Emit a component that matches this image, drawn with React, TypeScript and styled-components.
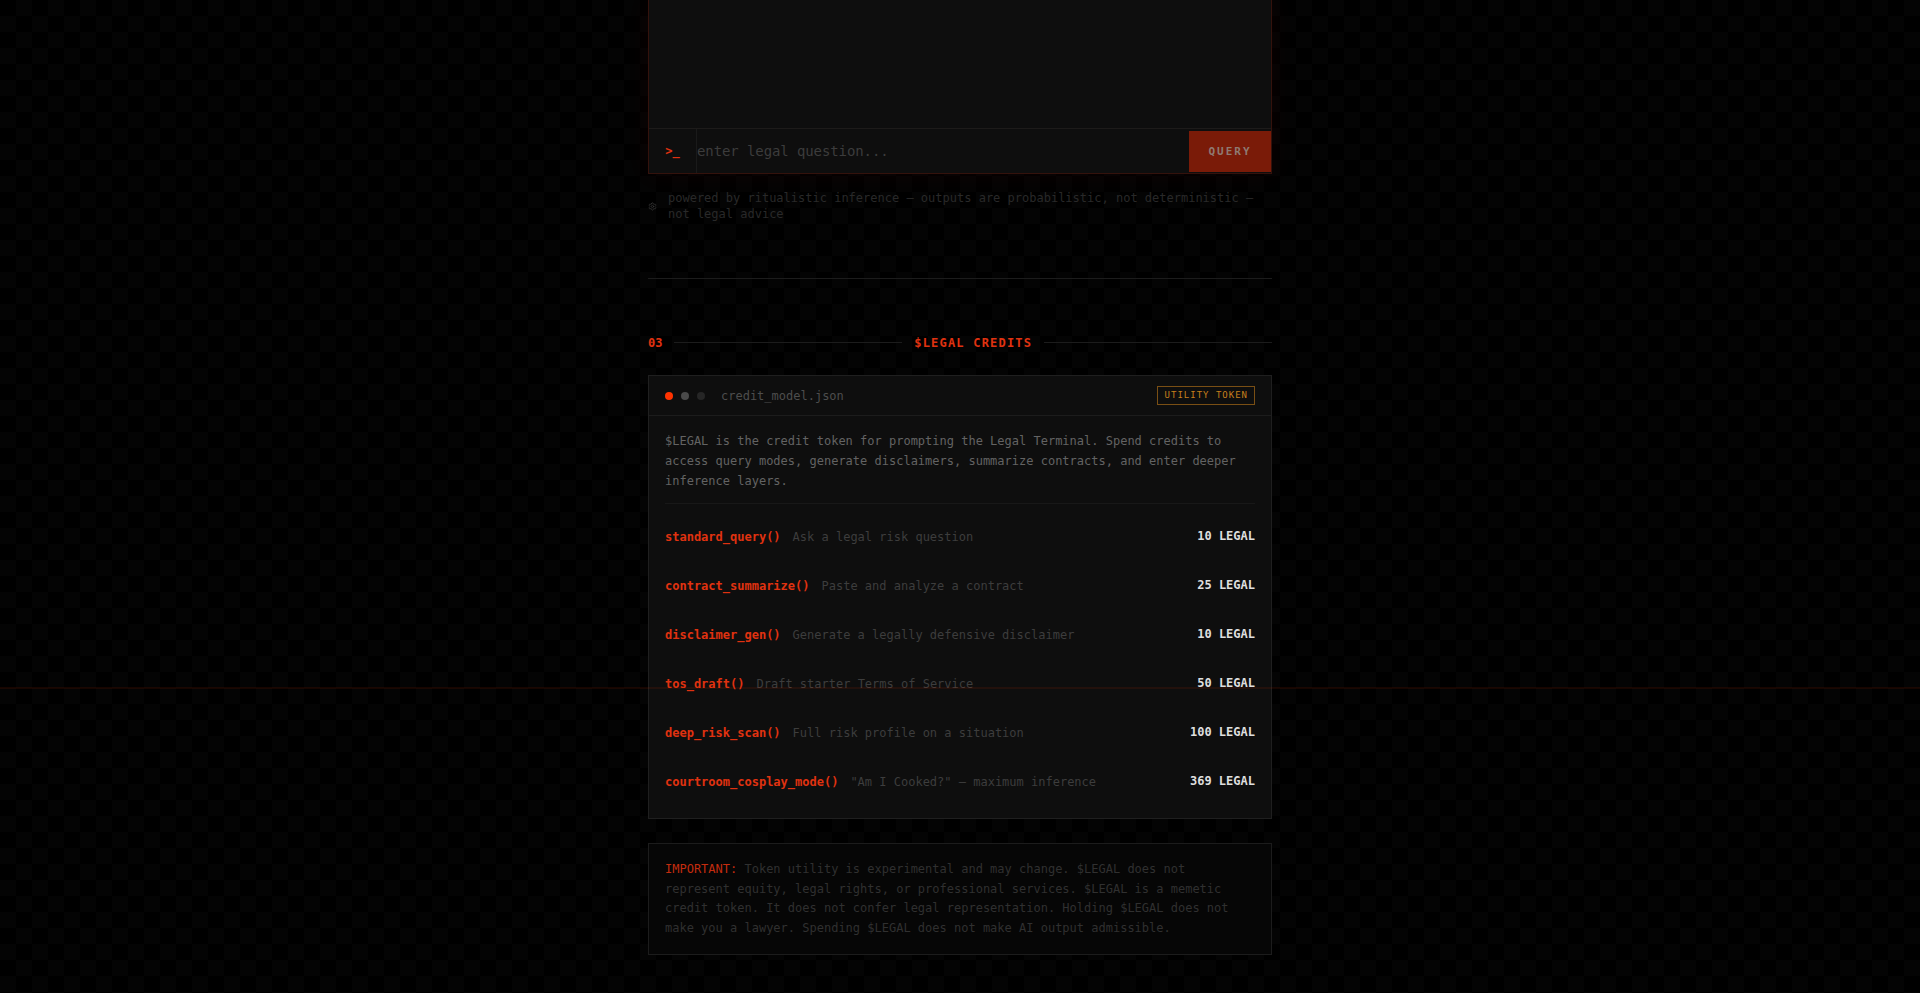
import React from 'react'
import styled, { createGlobalStyle } from 'styled-components'
import { Settings } from 'lucide-react'

const GlobalStyle = createGlobalStyle`
  html, body {
    margin: 0;
    height: 993px;
    overflow: hidden;
    background-color: #000;
    font-family: "DejaVu Sans Mono", "Liberation Mono", monospace;
  }
`

const Page = styled.div`
  position: relative;
  height: 993px;
  overflow: hidden;
  background-color: #010101;
  background-image: conic-gradient(
    #040404 25%,
    #000 0 50%,
    #040404 0 75%,
    #000 0
  );
  background-size: 32px 32px;
`

const ScanLine = styled.div`
  position: absolute;
  left: 0;
  right: 0;
  top: 687px;
  height: 2px;
  background: rgba(255, 51, 0, 0.09);
  pointer-events: none;
`

const Column = styled.main`
  width: 624px;
  margin: 0 auto;
`

const Terminal = styled.section`
  height: 174px;
  box-sizing: border-box;
  display: flex;
  flex-direction: column;
  justify-content: flex-end;
  background: #0e0e0e;
  border: 1px solid #34120c;
  border-top: 0;
  box-shadow: 0 0 24px rgba(255, 30, 0, 0.05);
`

const InputRow = styled.div`
  height: 44px;
  display: flex;
  align-items: stretch;
  border-top: 1px solid #1d1b1a;
`

const Prompt = styled.div`
  width: 47px;
  flex: none;
  display: flex;
  align-items: center;
  justify-content: center;
  border-right: 1px solid #1a1a1a;
  color: #e03210;
  font-size: 12px;
  font-weight: 700;
`

const QuestionInput = styled.input`
  flex: 1;
  min-width: 0;
  padding: 0;
  border: 0;
  outline: 0;
  background: transparent;
  color: #ccc;
  font-family: inherit;
  font-size: 14px;
  letter-spacing: -0.1px;

  &::placeholder {
    color: #3c3c3c;
    opacity: 1;
  }
`

const QueryButton = styled.button`
  width: 82px;
  flex: none;
  margin: 2px 0 1px;
  padding: 0;
  border: 0;
  background: #7a1b08;
  color: #8f7a72;
  font-family: inherit;
  font-size: 11px;
  font-weight: 700;
  letter-spacing: 2px;
`

const Footnote = styled.p`
  display: flex;
  align-items: center;
  gap: 11px;
  margin: 16px 0 0;
  font-size: 12px;
  line-height: 16px;
  color: #292929;
`

const FootnoteIcon = styled(Settings)`
  flex: none;
  width: 9px;
  height: 9px;
  color: #383838;
`

const Rule = styled.hr`
  height: 1px;
  margin: 56px 0;
  border: 0;
  background: #1c1c1c;
`

const SectionHead = styled.header`
  display: flex;
  align-items: center;
  gap: 12px;
  height: 16px;
  margin-bottom: 24px;
`

const SectionNumber = styled.span`
  color: #e03210;
  font-size: 12px;
  font-weight: 700;
`

const SectionLine = styled.span`
  flex: 1;
  height: 1px;
  margin-bottom: 1px;
  background: #1c1c1c;
`

const SectionTitle = styled.h2`
  margin: 0;
  color: #e03210;
  font-size: 12px;
  font-weight: 700;
  letter-spacing: 1.2px;
`

const Card = styled.section`
  background: #0e0e0e;
  border: 1px solid #1f1f1f;
`

const CardHeader = styled.div`
  height: 40px;
  box-sizing: border-box;
  display: flex;
  align-items: center;
  padding: 0 16px;
  border-bottom: 1px solid #1c1c1c;
`

const Dots = styled.div`
  display: flex;
  gap: 8px;
  margin-right: 16px;
`

const Dot = styled.i<{ $color: string }>`
  width: 8px;
  height: 8px;
  border-radius: 50%;
  background: ${p => p.$color};
`

const FileName = styled.span`
  flex: 1;
  color: #4d4d4d;
  font-size: 12px;
`

const Badge = styled.span`
  padding: 3px 6px 3px 7px;
  border: 1px solid #7a4f14;
  color: #c67f1c;
  font-size: 9px;
  line-height: 11px;
  letter-spacing: 1px;
`

const CardBody = styled.div`
  padding: 16px 16px 16px;
`

const Intro = styled.p`
  margin: 0 0 14px;
  padding-bottom: 12px;
  border-bottom: 1px solid #181818;
  color: #636363;
  font-size: 12px;
  line-height: 1.65;
`

const PriceList = styled.ul`
  display: flex;
  flex-direction: column;
  gap: 10px;
  margin: 0;
  padding: 0;
  list-style: none;
`

const PriceRow = styled.li`
  display: flex;
  align-items: center;
  gap: 12px;
  padding: 10px 0;
  font-size: 12px;
  line-height: 19px;
`

const FnName = styled.span`
  color: #e03210;
  font-weight: 700;
`

const FnDesc = styled.span`
  flex: 1;
  color: #3d3d3d;
`

const FnCost = styled.span`
  margin-bottom: 2px;
  line-height: 17px;
  color: #dedede;
  font-weight: 700;
`

const Notice = styled.p`
  margin: 24px 0 0;
  padding: 16px;
  border: 1px solid #1c1c1c;
  background: #060606;
  color: #303030;
  font-size: 12px;
  line-height: 19.5px;
`

const NoticeLabel = styled.strong`
  color: #c42c0e;
  font-weight: 400;
`

const prices = [
  { fn: 'standard_query()', desc: 'Ask a legal risk question', cost: '10 LEGAL' },
  { fn: 'contract_summarize()', desc: 'Paste and analyze a contract', cost: '25 LEGAL' },
  { fn: 'disclaimer_gen()', desc: 'Generate a legally defensive disclaimer', cost: '10 LEGAL' },
  { fn: 'tos_draft()', desc: 'Draft starter Terms of Service', cost: '50 LEGAL' },
  { fn: 'deep_risk_scan()', desc: 'Full risk profile on a situation', cost: '100 LEGAL' },
  { fn: 'courtroom_cosplay_mode()', desc: '"Am I Cooked?" — maximum inference', cost: '369 LEGAL' },
]

const App = () => {
  return (
    <Page>
      <GlobalStyle />
      <Column>
        <Terminal>
          <InputRow>
            <Prompt>&gt;_</Prompt>
            <QuestionInput placeholder="enter legal question..." />
            <QueryButton>QUERY</QueryButton>
          </InputRow>
        </Terminal>

        <Footnote>
          <FootnoteIcon />
          <span>
            powered by ritualistic inference — outputs are probabilistic, not deterministic — not legal advice
          </span>
        </Footnote>

        <Rule />

        <SectionHead>
          <SectionNumber>03</SectionNumber>
          <SectionLine />
          <SectionTitle>$LEGAL CREDITS</SectionTitle>
          <SectionLine />
        </SectionHead>

        <Card>
          <CardHeader>
            <Dots>
              <Dot $color="#ff3300" />
              <Dot $color="#4a4a4a" />
              <Dot $color="#262626" />
            </Dots>
            <FileName>credit_model.json</FileName>
            <Badge>UTILITY TOKEN</Badge>
          </CardHeader>
          <CardBody>
            <Intro>
              $LEGAL is the credit token for prompting the Legal Terminal. Spend credits to access query modes,
              generate disclaimers, summarize contracts, and enter deeper inference layers.
            </Intro>
            <PriceList>
              {prices.map(p => (
                <PriceRow key={p.fn}>
                  <FnName>{p.fn}</FnName>
                  <FnDesc>{p.desc}</FnDesc>
                  <FnCost>{p.cost}</FnCost>
                </PriceRow>
              ))}
            </PriceList>
          </CardBody>
        </Card>

        <Notice>
          <NoticeLabel>IMPORTANT:</NoticeLabel> Token utility is experimental and may change. $LEGAL does not
          represent equity, legal rights, or professional services. $LEGAL is a memetic credit token. It does not
          confer legal representation. Holding $LEGAL does not make you a lawyer. Spending $LEGAL does not make AI
          output admissible.
        </Notice>
      </Column>
      <ScanLine />
    </Page>
  )
}

export default App
